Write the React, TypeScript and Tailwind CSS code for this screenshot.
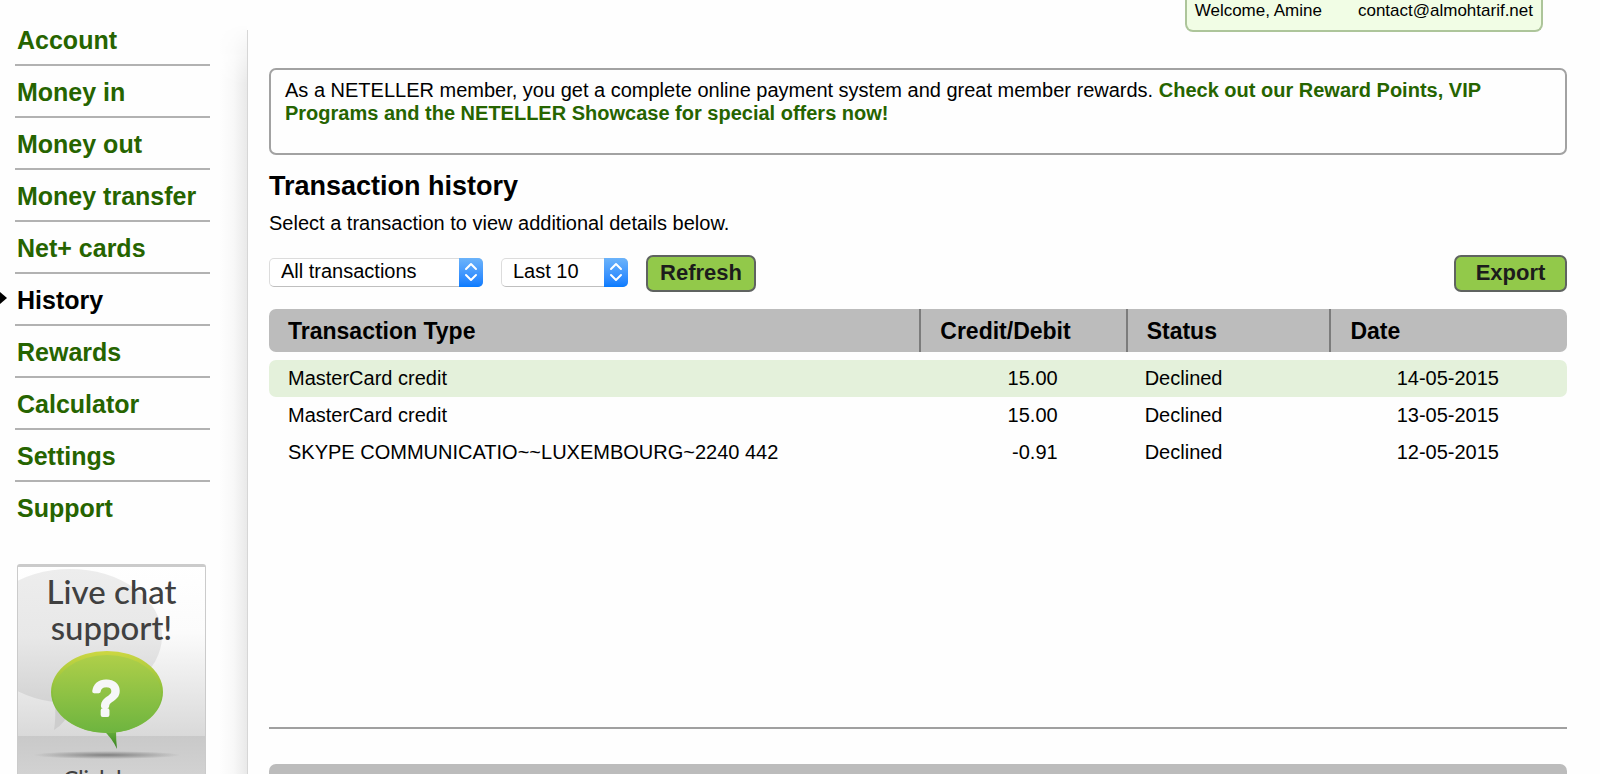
import React, { useState } from 'react';

interface Transaction {
  id: number;
  type: string;
  amount: string;
  status: string;
  date: string;
}

const navItems = [
  'Account',
  'Money in',
  'Money out',
  'Money transfer',
  'Net+ cards',
  'History',
  'Rewards',
  'Calculator',
  'Settings',
  'Support',
];

const transactions: Transaction[] = [
  { id: 1, type: 'MasterCard credit', amount: '15.00', status: 'Declined', date: '14-05-2015' },
  { id: 2, type: 'MasterCard credit', amount: '15.00', status: 'Declined', date: '13-05-2015' },
  { id: 3, type: 'SKYPE COMMUNICATIO~~LUXEMBOURG~2240 442', amount: '-0.91', status: 'Declined', date: '12-05-2015' },
];

const NavMenu: React.FC = () => (
  <nav>
    <ul>
      {navItems.map(item => {
        const active = item === 'History';
        return (
          <li key={item} className="relative h-[52px] border-b-2 border-[#b2b2b2] pt-[2px] last:border-transparent">
            {active && (
              <svg className="absolute -left-[15px] top-[17px]" width="7" height="14" viewBox="0 0 7 14">
                <path d="M0 1 L7 7 L0 13 Z" fill="#000" />
              </svg>
            )}
            <a
              href="#"
              className={`block pl-[2px] text-[25px] leading-[48px] font-bold ${active ? 'text-black' : 'text-[#266400]'}`}
            >
              {item}
            </a>
          </li>
        );
      })}
    </ul>
  </nav>
);

const LiveChatCard: React.FC = () => (
  <a
    href="#"
    className="relative mt-[30px] ml-[2px] block h-[260px] w-[189px] shrink-0 overflow-hidden rounded-[3px] border border-t-[3px] border-[#cbcbcb] text-center font-[Lato,sans-serif] text-[#404040]"
  >
    <svg className="absolute -top-[3px] -left-px" width="189" height="260" viewBox="0 0 189 260">
      <defs>
        <linearGradient id="wall" x1="0" y1="0" x2="0" y2="1">
          <stop offset="0" stopColor="#fff" />
          <stop offset="0.4" stopColor="#fbfbfb" />
          <stop offset="1" stopColor="#d9d9d9" />
        </linearGradient>
        <linearGradient id="floor" x1="0" y1="0" x2="0" y2="1">
          <stop offset="0" stopColor="#c9c9c9" />
          <stop offset="1" stopColor="#dedede" />
        </linearGradient>
        <linearGradient id="backBubble" x1="0" y1="0" x2="0" y2="1">
          <stop offset="0" stopColor="#ededed" />
          <stop offset="0.5" stopColor="#e8e8e8" />
          <stop offset="1" stopColor="#d3d3d3" />
        </linearGradient>
        <linearGradient id="bubble" x1="0" y1="0" x2="0" y2="1">
          <stop offset="0" stopColor="#afcf49" />
          <stop offset="1" stopColor="#6db43f" />
        </linearGradient>
        <linearGradient id="rim" x1="0" y1="0" x2="0" y2="1">
          <stop offset="0" stopColor="#cdd741" />
          <stop offset="0.6" stopColor="#7fbb3c" />
        </linearGradient>
        <linearGradient id="tail" x1="0" y1="0" x2="0" y2="1">
          <stop offset="0" stopColor="#6db43f" />
          <stop offset="1" stopColor="#35801f" />
        </linearGradient>
        <radialGradient id="ground">
          <stop offset="0" stopColor="#808080" />
          <stop offset="1" stopColor="#808080" stopOpacity="0" />
        </radialGradient>
      </defs>
      <rect width="189" height="172" fill="url(#wall)" />
      <rect y="172" width="189" height="88" fill="url(#floor)" />
      <ellipse cx="53" cy="72" rx="92" ry="67" fill="url(#backBubble)" />
      <path d="M38 136 Q39 154 37 166 Q48 160 56 142 Z" fill="#cdcdcd" />
      <ellipse cx="90" cy="191" rx="74" ry="4" fill="url(#ground)" />
      <path d="M86 166 Q95 174 100 185 Q99 176 99 165 Z" fill="url(#tail)" />
      <ellipse cx="90" cy="128" rx="56" ry="41" fill="url(#rim)" />
      <ellipse cx="90" cy="130" rx="54" ry="39" fill="url(#bubble)" />
      <text
        x="89"
        y="151"
        textAnchor="middle"
        fontFamily="Liberation Sans, sans-serif"
        fontSize="49"
        fill="#f6f7f8"
        stroke="#f6f7f8"
        strokeWidth="4"
        strokeLinejoin="round"
      >
        ?
      </text>
    </svg>
    <span className="relative block pt-[6px] text-[33px] leading-[36px] font-medium">
      Live chat
      <br />
      support!
    </span>
    <span className="relative mt-[121px] block text-[22px] leading-[24px] font-medium">Click here</span>
  </a>
);

interface PickerProps {
  id: string;
  label: string;
  options: string[];
  className: string;
}

const Picker: React.FC<PickerProps> = ({ id, label, options, className }) => {
  const [value, setValue] = useState(options[0]);

  return (
    <div className={`relative h-[29px] ${className}`}>
      <select
        id={id}
        aria-label={label}
        value={value}
        onChange={e => setValue(e.target.value)}
        className="h-full w-full appearance-none rounded-[5px] border border-[#dcdcdc] border-b-[#bfbfbf] bg-white pr-6 pb-[2px] pl-[11px] text-[20px] leading-[24px] text-black"
      >
        {options.map(option => (
          <option key={option}>{option}</option>
        ))}
      </select>
      <span className="pointer-events-none absolute inset-y-0 right-0 flex w-6 items-center justify-center rounded-r-[5px] bg-linear-to-b from-[#6bb3fa] to-[#067bff]">
        <svg width="14" height="20" viewBox="0 0 14 20" fill="none" stroke="#fff" strokeWidth="2" strokeLinecap="round" strokeLinejoin="round">
          <path d="M2 7 L7 2 L12 7" />
          <path d="M2 13 L7 18 L12 13" />
        </svg>
      </span>
    </div>
  );
};

const buttonClass =
  'h-[37px] rounded-[7px] border-2 border-[#5f6360] bg-[#92c94a] pb-[2px] text-[22px] leading-[28px] font-bold text-[#1c1c1c]';

const TransactionTable: React.FC = () => {
  const [selected, setSelected] = useState(1);

  return (
    <table className="w-full table-fixed border-separate border-spacing-0 text-left text-black">
      <thead>
        <tr className="h-[43px] text-[23px] leading-[28px]">
          <th className="w-[50.1%] rounded-l-[7px] bg-[#bcbcbc] p-0 pl-[19px]">Transaction Type</th>
          <th className="w-[15.9%] border-l-2 border-[#7c7c7c] bg-[#bcbcbc] p-0 pl-[19px]">Credit/Debit</th>
          <th className="w-[15.7%] border-l-2 border-[#7c7c7c] bg-[#bcbcbc] p-0 pl-[19px]">Status</th>
          <th className="rounded-r-[7px] bg-[#bcbcbc] p-0">
            <div className="flex h-[43px] items-center border-l-2 border-[#7c7c7c] pl-[19px]">Date</div>
          </th>
        </tr>
      </thead>
      <tbody className="text-[20px] leading-[24px] before:block before:h-2 before:content-['']">
        {transactions.map(t => (
          <tr
            key={t.id}
            onClick={() => setSelected(t.id)}
            className={`h-[37px] cursor-pointer ${t.id === selected ? 'bg-[#e4f1db]' : ''} [clip-path:inset(0_round_7px)]`}
          >
            <td className="p-0 pb-[2px] pl-[19px]">{t.type}</td>
            <td className="p-0 pr-[68px] pb-[2px] text-right">{t.amount}</td>
            <td className="p-0 pb-[2px] pl-[19px]">{t.status}</td>
            <td className="p-0 pr-[68px] pb-[2px] text-right">{t.date}</td>
          </tr>
        ))}
      </tbody>
    </table>
  );
};

const App: React.FC = () => {
  return (
    <div className="flex h-screen overflow-hidden bg-[#fefefe] font-['Liberation_Sans',Arial,sans-serif] text-black">
      <aside className="flex w-[247px] shrink-0 justify-between pl-[15px]">
        <div className="flex w-[195px] flex-col pt-[14px]">
          <NavMenu />
          <LiveChatCard />
        </div>
        <div className="mt-[24px] w-[27px] bg-linear-to-r from-[#fefefe] via-[#f8f8f8] to-[#e9e9e9] [mask-image:linear-gradient(to_bottom,transparent,black_60px)]" />
      </aside>
      <div className="mt-[30px] w-px shrink-0 bg-[#d6d6d6]" />

      <main className="min-w-0 flex-1 pr-[33px] pl-[21px]">
        <header className="flex justify-end pr-[24px]">
          <div className="flex h-[32px] gap-[36px] rounded-b-[8px] border-2 border-t-0 border-[#adc59a] bg-[#f1fde5] px-[8px] text-[17px] leading-[22px]">
            <span>Welcome, Amine</span>
            <span>contact@almohtarif.net</span>
          </div>
        </header>

        <section className="mt-[36px] min-h-[87px] rounded-[7px] border-2 border-[#a2a2a2] px-[14px] pt-[9px] text-[20px] leading-[23px]">
          <p>
            As a NETELLER member, you get a complete online payment system and great member rewards.{' '}
            <a href="#" className="font-bold text-[#266400]">
              Check out our Reward Points, VIP Programs and the NETELLER Showcase for special offers now!
            </a>
          </p>
        </section>

        <h1 className="mt-[15px] text-[27px] leading-[32px] font-bold">Transaction history</h1>
        <p className="mt-[9px] text-[20px] leading-[24px]">Select a transaction to view additional details below.</p>

        <div className="mt-[20px] flex items-center">
          <Picker
            id="type"
            label="Transaction type"
            options={['All transactions', 'Deposits', 'Withdrawals']}
            className="mb-[3px] w-[214px]"
          />
          <Picker
            id="range"
            label="Range"
            options={['Last 10', 'Last 20', 'Last 50']}
            className="mb-[3px] ml-[18px] w-[127px]"
          />
          <button type="button" className={`ml-[18px] w-[110px] ${buttonClass}`}>
            Refresh
          </button>
          <button type="button" className={`ml-auto w-[113px] ${buttonClass}`}>
            Export
          </button>
        </div>

        <div className="mt-[17px] min-h-[418px]">
          <TransactionTable />
        </div>

        <hr className="border-t-2 border-[#a0a0a0]" />
        <div className="mt-[35px] h-[44px] rounded-[7px] bg-[#bcbcbc]" />
      </main>
    </div>
  );
};

export default App;
